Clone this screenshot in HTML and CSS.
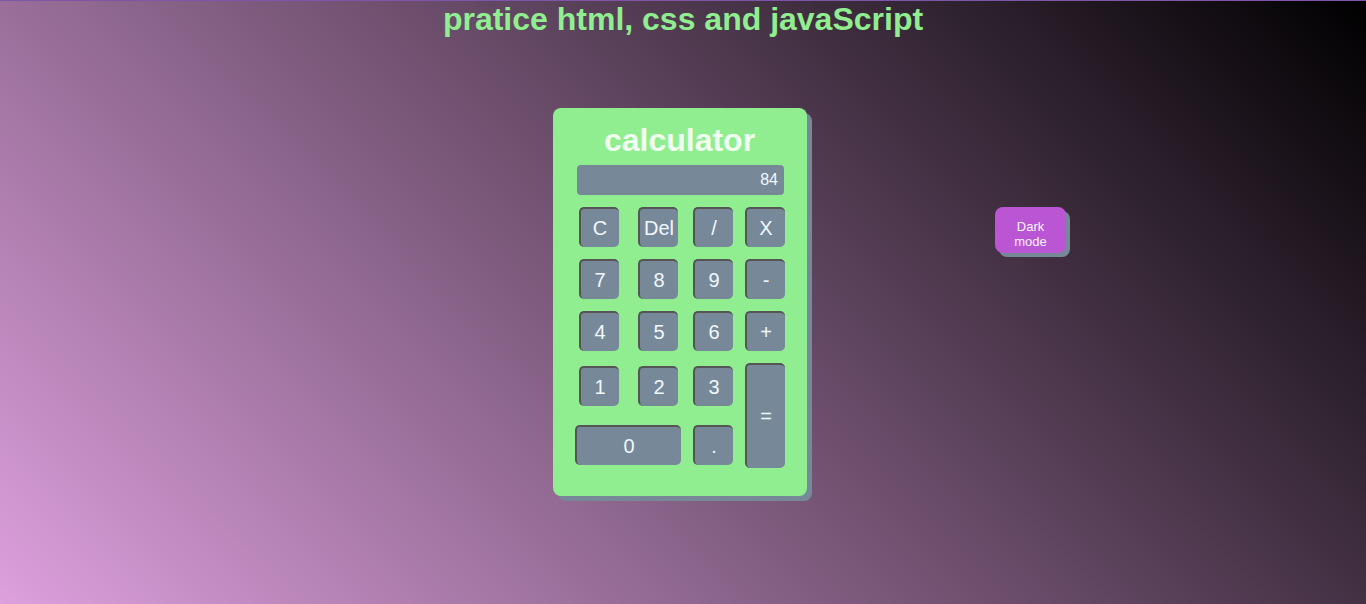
FILE: index.html
```html
<!DOCTYPE html>
<html lang="en">
<head>
<meta charset="utf-8">
<title>calculator</title>
<link rel="stylesheet" href="styles.css">
</head>
<body>
<h1 class="page-title">pratice html, css and javaScript</h1>
<main class="stage">
  <section class="calc">
    <h2 class="calc-title">calculator</h2>
    <div class="display">84</div>
    <div class="keys">
      <button class="key">C</button>
      <button class="key">Del</button>
      <button class="key">/</button>
      <button class="key">X</button>
      <button class="key">7</button>
      <button class="key">8</button>
      <button class="key">9</button>
      <button class="key">-</button>
      <button class="key">4</button>
      <button class="key">5</button>
      <button class="key">6</button>
      <button class="key">+</button>
      <button class="key low">1</button>
      <button class="key low">2</button>
      <button class="key low">3</button>
      <button class="key equals">=</button>
      <button class="key low zero">0</button>
      <button class="key low dot">.</button>
    </div>
  </section>
  <button class="mode">Dark<br>mode</button>
</main>
</body>
</html>
```
FILE: styles.css
```css
html, body {
  margin: 0;
  padding: 0;
}
body {
  min-height: 604px;
  box-sizing: border-box;
  border-top: 1px solid #7e55a8;
  background: linear-gradient(45deg, #dda0dd, #000000);
  font-family: "Liberation Sans", Arial, sans-serif;
}
.page-title {
  margin: 0;
  text-align: center;
  color: #90ee90;
  font-size: 32px;
  font-weight: bold;
  line-height: 36px;
}
.stage {
  display: flex;
  align-items: flex-start;
  padding-left: 553px;
  padding-top: 71px;
}
.calc {
  width: 254px;
  box-sizing: border-box;
  background: #90ee90;
  border-radius: 8px;
  box-shadow: 5px 5px 0 #778899;
  padding: 14px 23px 28px 22px;
}
.calc-title {
  margin: 0;
  text-align: center;
  color: #f0fff0;
  font-size: 32px;
  font-weight: bold;
  line-height: 37px;
}
.display {
  margin: 6px 0 0 2px;
  height: 30px;
  box-sizing: border-box;
  background: #778899;
  border-radius: 4px;
  color: #f0f8ff;
  font-size: 16px;
  line-height: 30px;
  text-align: right;
  padding-right: 6px;
}
.keys {
  margin-top: 12px;
  display: grid;
  grid-template-columns: 48px 70px 40px 64px;
  grid-template-rows: 52px 52px 52px 59px 46px;
  justify-items: center;
  align-items: start;
}
.key {
  width: 40px;
  height: 40px;
  box-sizing: border-box;
  padding: 0;
  margin: 0;
  background: #778899;
  color: #f0f8ff;
  font-family: "Liberation Sans", Arial, sans-serif;
  font-size: 20px;
  border: none;
  border-top: 2px solid #555555;
  border-left: 2px solid #555555;
  border-radius: 5px;
  display: flex;
  align-items: center;
  justify-content: center;
}
.key:nth-child(4n+1) {
  justify-self: end;
  margin-right: 4px;
}
.low {
  margin-top: 3px;
}
.key.low:nth-child(13) {
  justify-self: end;
  margin-right: 4px;
}
.equals {
  grid-column: 4;
  grid-row: 4 / 6;
  height: 105px;
  justify-self: start;
  margin-left: 12px;
}
.key:nth-child(4),
.key:nth-child(8),
.key:nth-child(12) {
  justify-self: start;
  margin-left: 12px;
}
.key:nth-child(2),
.key:nth-child(6),
.key:nth-child(10),
.key:nth-child(14) {
  justify-self: start;
  margin-left: 15px;
}
.zero {
  grid-column: 1 / 3;
  grid-row: 5;
  width: 106px;
  justify-self: start !important;
  margin-left: 0 !important;
  margin-right: 0 !important;
}
.dot {
  grid-column: 3;
  grid-row: 5;
}
.mode {
  margin-left: 188px;
  margin-top: 99px;
  width: 71px;
  height: 46px;
  box-sizing: border-box;
  padding: 12px 0 4px;
  background: #ba55d3;
  color: #f8f4ff;
  border: none;
  border-radius: 8px;
  box-shadow: 4px 4px 0 #778899;
  font-family: "Liberation Sans", Arial, sans-serif;
  font-size: 13px;
  line-height: 15px;
}
```
